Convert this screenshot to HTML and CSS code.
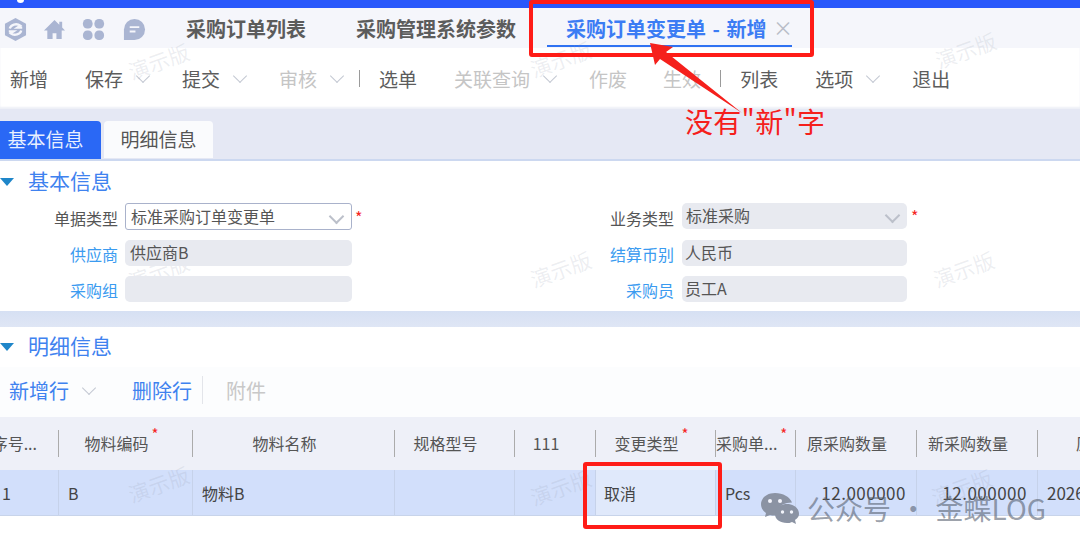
FILE: index.html
```html
<!DOCTYPE html>
<html lang="zh-CN">
<head>
<meta charset="utf-8">
<title>采购订单变更单</title>
<link rel="stylesheet" href="styles.css">
</head>
<body>
<div class="page">
  <div class="topbar"><span class="topdot"></span></div>
  <nav class="tabbar">
    <div class="nav-icons">
      <svg class="nav-icon nav-logo" viewBox="0 0 24 26"><path d="M12 1 23 7v12l-11 6L1 19V7z" fill="#aab5d2"/><path d="M6 12c1-4 7-6 11-3l-3 2h5M18 14c-1 4-7 6-11 3l3-2H5" fill="none" stroke="#f5f6fb" stroke-width="2.4"/></svg>
      <svg class="nav-icon" viewBox="0 0 24 24"><path d="M12 2 1 13h3.500v9h5.500v-6h4v6h5.500v-9H23l-3-3V4h-3v3z" fill="#aab5d2"/></svg>
      <svg class="nav-icon" viewBox="0 0 24 24"><g fill="#aab5d2"><rect x="1" y="1" width="10" height="10" rx="4.500"/><rect x="13" y="1" width="10" height="10" rx="4.500"/><rect x="1" y="13" width="10" height="10" rx="4.500"/><rect x="13" y="13" width="10" height="10" rx="4.500"/></g></svg>
      <svg class="nav-icon nav-chat" viewBox="0 0 24 24"><path d="M12 1a11 11 0 0 1 0 22H1V12A11 11 0 0 1 12 1z" fill="#aab5d2"/><path d="M7 9.500h10M7 14h6" stroke="#f5f6fb" stroke-width="2"/></svg>
    </div>
    <span class="tab tab-first">采购订单列表</span>
    <span class="tab tab-second">采购管理系统参数</span>
    <span class="tab tab-active">采购订单变更单 - 新增<span class="tab-close">×</span></span>
  </nav>
  <div class="toolbar">
    <span class="tb">新增</span>
    <span class="tb tb-c">保存<i class="chev"></i></span>
    <span class="tb tb-c">提交<i class="chev"></i></span>
    <span class="tb tb-c tb-off tb-end">审核<i class="chev"></i></span>
    <span class="tb-div"></span>
    <span class="tb">选单</span>
    <span class="tb tb-c tb-off tb-q">关联查询<i class="chev"></i></span>
    <span class="tb tb-off tb-zf">作废</span>
    <span class="tb tb-off tb-end2">生效</span>
    <span class="tb-div tb-div2"></span>
    <span class="tb">列表</span>
    <span class="tb tb-c">选项<i class="chev"></i></span>
    <span class="tb">退出</span>
  </div>
  <div class="subtabs">
    <span class="subtab subtab-on">基本信息</span>
    <span class="subtab">明细信息</span>
  </div>
  <section class="basic">
    <h2 class="sec"><i class="tri"></i>基本信息</h2>
    <div class="form">
      <label class="lbl">单据类型</label>
      <div class="fld fld-select">标准采购订单变更单<i class="chev chev-sm"></i><b class="star">*</b></div>
      <label class="lbl">业务类型</label>
      <div class="fld fld-off fld-b fld-bs">标准采购<i class="chev chev-sm"></i><b class="star">*</b></div>
      <label class="lbl lbl-link">供应商</label>
      <div class="fld fld-off">供应商B</div>
      <label class="lbl lbl-link">结算币别</label>
      <div class="fld fld-off fld-b">人民币</div>
      <label class="lbl lbl-link">采购组</label>
      <div class="fld fld-off"></div>
      <label class="lbl lbl-link">采购员</label>
      <div class="fld fld-off fld-b">员工A</div>
    </div>
  </section>
  <div class="band"></div>
  <section class="detail">
    <h2 class="sec sec-2"><i class="tri"></i>明细信息</h2>
    <div class="rowbar">
      <span class="rb rb-c">新增行<i class="chev"></i></span>
      <span class="rb">删除行</span>
      <span class="rb-div"></span>
      <span class="rb rb-off">附件</span>
    </div>
    <div class="grid grid-head">
      <div class="th th-seq"><span>序号...</span></div>
      <div class="th">物料编码<b class="hstar">*</b></div>
      <div class="th">物料名称</div>
      <div class="th">规格型号</div>
      <div class="th">111</div>
      <div class="th">变更类型<b class="hstar">*</b></div>
      <div class="th th-tight">采购单...<b class="hstar">*</b></div>
      <div class="th">原采购数量</div>
      <div class="th">新采购数量</div>
      <div class="th th-last">原</div>
    </div>
    <div class="grid grid-row">
      <div class="td td-seq">1</div>
      <div class="td">B</div>
      <div class="td">物料B</div>
      <div class="td"></div>
      <div class="td"></div>
      <div class="td td-on">取消</div>
      <div class="td">Pcs</div>
      <div class="td td-num">12.000000</div>
      <div class="td td-num">12.000000</div>
      <div class="td td-date">2026</div>
    </div>
  </section>

  <span class="wm wm1">演示版</span>
  <span class="wm wm2">演示版</span>
  <span class="wm wm3">演示版</span>
  <span class="wm wm4">演示版</span>
  <span class="wm wm5">演示版</span>
  <span class="wm wm6">演示版</span>
  <span class="wm wm7">演示版</span>
  <span class="wm wm8">演示版</span>
  <span class="wm wm9">演示版</span>

  <div class="mark mark-tab"></div>
  <div class="mark mark-cell"></div>
  <svg class="arrow" viewBox="0 0 1080 550"><polygon points="650,43 673,47 666,52 742,113 660,59 655,65" fill="#f5201c"/></svg>
  <span class="note">没有"新"字</span>
  <div class="wx">
    <svg class="wx-icon" viewBox="0 0 40 32"><path d="M15 1C7 1 1 6 1 12c0 4 2 7 5 9l-1 4 5-2c2 .5 4 .7 6 .5-.5-7 6-13 16-13C30 5 23 1 15 1z" fill="#8b93a3"/><path d="M27 12c-7 0-12 4.500-12 10s5 9 12 9c2 0 3 0 5-1l4 2-1-4c3-2 4-4 4-6 0-5.500-5-10-12-10z" fill="#8b93a3"/><g fill="#f2f4fb"><circle cx="10" cy="9" r="2"/><circle cx="20" cy="9" r="2"/><circle cx="22.500" cy="20" r="1.700"/><circle cx="31.500" cy="20" r="1.700"/></g></svg>
    <span class="wx-text">公众号 · 金蝶LOG</span>
  </div>
</div>
</body>
</html>
```
FILE: styles.css
```css
* { box-sizing: border-box; }
html, body { margin: 0; padding: 0; }
body { font-family: "Noto Sans CJK SC", "Noto Sans", sans-serif; color: #555; background: #fff; }
.page { position: relative; width: 1080px; height: 550px; overflow: hidden; background: #fff; }

.topbar { height: 8px; background: #2958fb; position: relative; }
.topdot { position: absolute; left: 17px; top: -3px; width: 7px; height: 6px; border-radius: 50%; background: #fff; }

.tabbar { height: 40px; background: #f5f6fb; display: flex; align-items: center; }
.nav-icons { display: flex; align-items: center; gap: 16px; padding-left: 4px; width: 186px; flex: none; }
.nav-icon { width: 23px; height: 23px; flex: none; margin-top: 2px; }
.nav-logo { height: 25px; width: 23px; }
.nav-chat { margin-left: 2px; }
.tab { font-size: 20px; font-weight: 700; height: 40px; line-height: 42px; color: #5c5c5c; white-space: nowrap; }
.tab-first { width: 170px; flex: none; }
.tab-second { width: 191px; flex: none; }
.tab-active { position: relative; width: 245px; flex: none; padding-left: 19px; color: #3b7cf4; word-spacing: 2px; }
.tab-active::after { content: ""; position: absolute; left: 0; right: 0; bottom: 1px; height: 2.500px; background: #2f72f2; }
.tab-close { position: absolute; left: 226px; top: -1px; font-weight: 400; font-size: 20px; color: #b9bdc8; }

.toolbar { height: 61px; display: flex; align-items: center; padding-left: 10px; background: #fff; box-shadow: inset 0 -2px 2px #eef0f7; }
.tb { display: flex; align-items: center; font-size: 19px; color: #5c5c5c; margin-right: 37px; white-space: nowrap; }
.tb-c { margin-right: 32px; }
.tb-off { color: #c5c5c5; }
.tb-end { margin-right: 15px; }
.tb-q { margin-right: 32px; }
.tb-zf { margin-right: 36px; }
.tb-end2 { margin-right: 19px; }
.tb-div { width: 1px; height: 17px; background: #9a9a9a; margin-right: 19px; }
.tb-div2 { margin-right: 19px; }
.chev { display: block; width: 15px; height: 9px; margin-left: 12px; position: relative; flex: none; }
.chev::before { content: ""; position: absolute; left: 3px; top: -3px; width: 9px; height: 9px; border-right: 1.500px solid #c3c8d2; border-bottom: 1.500px solid #c3c8d2; transform: rotate(45deg); }

.subtabs { height: 52px; padding-top: 12px; background: #e5e8f4; display: flex; align-items: flex-start; gap: 3px; border-bottom: 2px solid #ccd8f0; }
.subtab { width: 109px; height: 37px; background: #fafbfd; border-radius: 4px 4px 0 0; font-size: 19px; line-height: 35px; text-align: center; color: #555; }
.subtab-on { width: 101px; height: 38px; background: #2a68f5; color: #e8efff; border-radius: 0 4px 0 0; padding-right: 10px; }

.basic { height: 150px; background: #fff; padding-top: 5px; }
.sec { margin: 0; height: 32px; padding-bottom: 4px; display: flex; align-items: center; gap: 14px; font-size: 21px; font-weight: 400; color: #3f82ef; }
.tri { width: 0; height: 0; border-left: 7px solid transparent; border-right: 7px solid transparent; border-top: 8px solid #1f86c9; flex: none; margin-top: 4px; }
.form { position: relative; z-index: 1; display: grid; grid-template-columns: 118px 227px 315px 225px; grid-template-rows: 28px 27px 27px; column-gap: 7px; row-gap: 9px; margin-top: 5px; }
.lbl { font-size: 16px; text-align: right; color: #555; line-height: 30px; white-space: nowrap; }
.lbl-link { color: #3b9bf0; line-height: 28px; }
.fld { position: relative; font-size: 16px; line-height: 25px; padding-left: 5px; padding-bottom: 1px; border-radius: 5px; color: #555; display: flex; align-items: center; justify-content: flex-start; height: 26px; }
.fld-select { height: 27px; border: 1px solid #a9b2cb; border-radius: 3px; padding-left: 5px; }
.fld-off { background: #e8eaf0; }
.fld-b { padding-left: 3px; margin-left: 1px; margin-right: -1px; }
.fld-bs { padding-left: 4px; }
.chev-sm { position: absolute; right: 8px; top: 10px; margin: 0; }
.chev-sm::before { border-width: 2px; border-color: #bcc0ca; }
.star { position: absolute; left: 100%; top: 1px; margin-left: 4px; color: #f5261f; font-size: 16px; font-weight: 400; line-height: 24px; }

.band { height: 16px; background: linear-gradient(#d6e0f3, #dfe6f5); }
.detail { background: #fff; }
.sec-2 { height: 40px; }
.rowbar { height: 50px; padding-bottom: 4px; background: #fcfdfe; display: flex; align-items: center; padding-left: 9px; }
.rb { display: flex; align-items: center; font-size: 20px; color: #3f82ef; white-space: nowrap; }
.rb-c { margin-right: 36px; }
.rb-off { color: #c8c8c8; margin-left: 23px; }
.rb-div { width: 1px; height: 28px; background: #e3e5ea; margin-left: 10px; }

.grid { display: grid; grid-template-columns: 59px 134px 202px 120px 81px 120px 80px 121px 121px 42px; }
.grid-head { height: 53px; background: #eef0f8; align-items: center; }
.th { position: relative; height: 27px; line-height: 27px; font-size: 16px; text-align: center; padding-right: 18px; color: #555; border-right: 1px solid #ababab; white-space: nowrap; }
.th-seq { display: flex; justify-content: flex-end; overflow: hidden; padding-right: 21px; }
.th-seq span { flex: none; }
.th-tight { padding: 0; text-align: left; }
.th-last { border-right: 0; padding: 0 0 0 38px; text-align: left; overflow: hidden; }
.hstar { position: absolute; top: -6px; margin-left: 3px; color: #f5261f; font-weight: 400; font-size: 15px; line-height: 20px; }
.grid-row { height: 46px; background: #d2dffb; border-bottom: 1px solid #c8d4ea; }
.td { font-size: 16px; line-height: 46px; padding-left: 9px; color: #444; border-right: 1px solid #c6d2ea; white-space: nowrap; overflow: hidden; }
.td-seq { padding-left: 2px; }
.td-on { background: #e0e9fb; padding-left: 8px; }
.td-num { text-align: right; padding-right: 10px; font-size: 17px; letter-spacing: .5px; }
.td-date { border-right: 0; font-size: 17px; }

.wm { position: absolute; font-size: 21px; line-height: 24px; color: rgba(140, 150, 170, .16); transform: rotate(-20deg); white-space: nowrap; }
.wm1 { left: 127px; top: 49px; }
.wm2 { left: 529px; top: 47px; }
.wm3 { left: 934px; top: 38px; }
.wm4 { left: 529px; top: 257px; }
.wm5 { left: 932px; top: 257px; }
.wm6 { left: 127px; top: 472px; }
.wm7 { left: 529px; top: 475px; }
.wm8 { left: 930px; top: 475px; }
.wm9 { left: 127px; top: 259px; z-index: 0; }

.mark { position: absolute; z-index: 2; border: 4px solid #ff1c17; border-radius: 3px; }
.mark-tab { left: 529px; top: 0; width: 285px; height: 57px; }
.mark-cell { left: 583px; top: 462px; width: 139px; height: 67px; }
.arrow { position: absolute; z-index: 2; left: 0; top: 0; width: 1080px; height: 550px; }
.note { position: absolute; z-index: 2; left: 685px; top: 102px; font-size: 28px; line-height: 38px; color: #f5201c; white-space: nowrap; letter-spacing: .3px; }

.wx { position: absolute; z-index: 2; left: 760px; top: 490px; display: flex; align-items: center; gap: 7px; color: rgba(90, 100, 115, .62); }
.wx-icon { width: 40px; height: 32px; flex: none; }
.wx-text { font-size: 28px; line-height: 36px; white-space: nowrap; word-spacing: 2px; }
```
